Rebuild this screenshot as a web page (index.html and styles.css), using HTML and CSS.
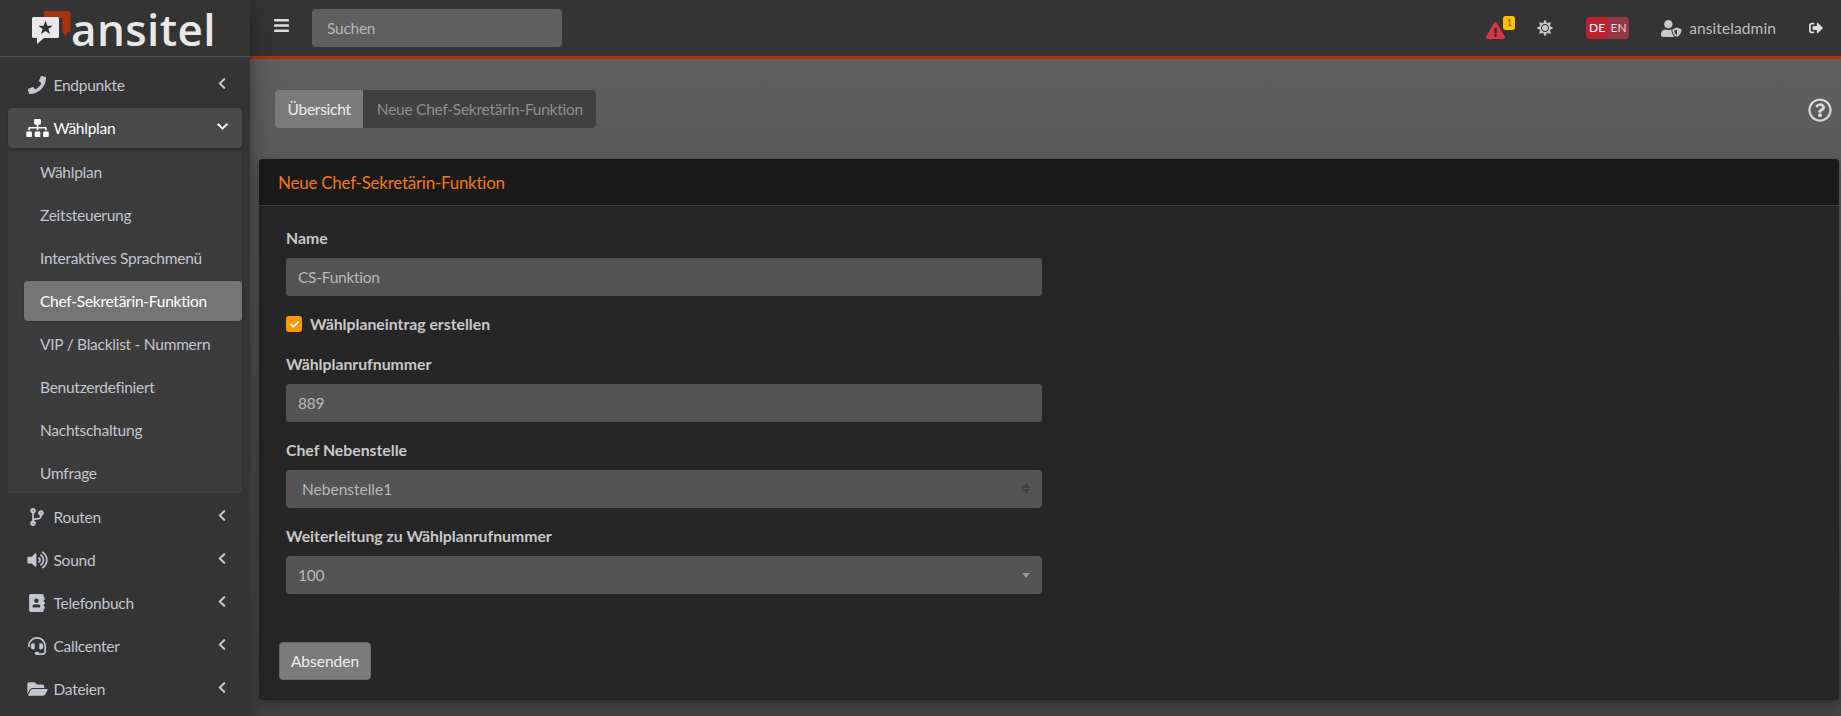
FILE: index.html
```html
<!DOCTYPE html>
<html lang="de">
<head>
<meta charset="utf-8">
<title>Neue Chef-Sekretärin-Funktion</title>
<link rel="stylesheet" href="styles.css">
</head>
<body>
<svg class="defs" width="0" height="0" aria-hidden="true">
  <symbol id="i-phone" viewBox="0 0 512 512"><path d="M493.4 24.6l-104-24c-11.3-2.6-22.9 3.3-27.5 13.9l-48 112c-4.2 9.8-1.4 21.3 6.9 28l60.6 49.6c-36 76.7-98.9 140.5-177.2 177.2l-49.6-60.6c-6.8-8.3-18.2-11.1-28-6.9l-112 48C3.9 366.5-2 378.1.6 389.4l24 104C27.1 504.2 36.7 512 48 512c256.1 0 464-207.5 464-464 0-11.2-7.7-20.9-18.6-23.4z"/></symbol>
  <symbol id="i-sitemap" viewBox="0 0 640 512"><path d="M128 352H32c-17.67 0-32 14.33-32 32v96c0 17.67 14.33 32 32 32h96c17.67 0 32-14.33 32-32v-96c0-17.67-14.33-32-32-32zm-24-80h192v48h48v-48h192v48h48v-57.59c0-21.17-17.23-38.41-38.41-38.41H344v-64h40c17.67 0 32-14.33 32-32V32c0-17.67-14.33-32-32-32H256c-17.67 0-32 14.33-32 32v96c0 17.67 14.33 32 32 32h40v64H94.41C73.23 224 56 241.23 56 262.41V320h48v-48zm264 80h-96c-17.67 0-32 14.33-32 32v96c0 17.67 14.33 32 32 32h96c17.67 0 32-14.33 32-32v-96c0-17.67-14.33-32-32-32zm240 0h-96c-17.67 0-32 14.33-32 32v96c0 17.67 14.33 32 32 32h96c17.67 0 32-14.33 32-32v-96c0-17.67-14.33-32-32-32z"/></symbol>
  <symbol id="i-left" viewBox="0 0 320 512"><path d="M34.52 239.03L228.87 44.69c9.37-9.37 24.57-9.37 33.94 0l22.67 22.67c9.36 9.36 9.37 24.52.04 33.9L131.49 256l154.02 154.75c9.34 9.38 9.32 24.54-.04 33.9l-22.67 22.67c-9.37 9.37-24.57 9.37-33.94 0L34.52 272.97c-9.37-9.37-9.37-24.57 0-33.94z"/></symbol>
  <symbol id="i-down" viewBox="0 0 448 512"><path d="M207.029 381.476L12.686 187.132c-9.373-9.373-9.373-24.569 0-33.941l22.667-22.667c9.357-9.357 24.522-9.375 33.901-.04L224 284.505l154.745-154.021c9.379-9.335 24.544-9.317 33.901.04l22.667 22.667c9.373 9.373 9.373 24.569 0 33.941L240.971 381.476c-9.373 9.372-24.569 9.372-33.942 0z"/></symbol>
  <symbol id="i-branch" viewBox="0 0 384 512"><path d="M384 144c0-44.2-35.8-80-80-80s-80 35.8-80 80c0 36.4 24.3 67.1 57.5 76.8-.6 16.1-4.2 28.5-11 36.9-15.4 19.2-49.3 22.4-85.2 25.7-28.2 2.6-57.4 5.4-81.3 16.9v-144c32.5-10.2 56-40.5 56-76.3 0-44.2-35.8-80-80-80S0 35.8 0 80c0 35.8 23.5 66.1 56 76.3v199.3C23.5 365.9 0 396.2 0 432c0 44.2 35.8 80 80 80s80-35.8 80-80c0-34-21.2-63.1-51.2-74.6 3.1-5.2 7.8-9.8 14.9-13.4 16.2-8.2 40.4-10.4 66.1-12.8 42.2-3.9 90-8.4 118.2-43.4 14-17.4 21.1-39.8 21.6-67.9 31.6-10.8 54.4-40.7 54.4-75.9zM80 64c8.8 0 16 7.2 16 16s-7.2 16-16 16-16-7.2-16-16 7.2-16 16-16zm0 384c-8.8 0-16-7.2-16-16s7.2-16 16-16 16 7.2 16 16-7.2 16-16 16zm224-320c8.8 0 16 7.2 16 16s-7.2 16-16 16-16-7.2-16-16 7.2-16 16-16z"/></symbol>
  <symbol id="i-volume" viewBox="0 0 576 512"><path d="M215.03 71.05L126.06 160H24c-13.26 0-24 10.74-24 24v144c0 13.25 10.74 24 24 24h102.06l88.97 88.95c15.03 15.03 40.97 4.47 40.97-16.97V88.02c0-21.46-25.96-31.98-40.97-16.97zm233.32-51.08c-11.17-7.33-26.18-4.24-33.51 6.95-7.34 11.17-4.22 26.18 6.95 33.51 66.27 43.49 105.82 116.6 105.82 195.58 0 78.98-39.55 152.09-105.82 195.58-11.17 7.32-14.29 22.34-6.95 33.5 7.04 10.71 21.93 14.56 33.51 6.95C528.27 439.58 576 351.33 576 256S528.27 72.43 448.35 19.97zM480 256c0-63.53-32.06-121.94-85.77-156.24-11.19-7.14-26.03-3.82-33.12 7.46s-3.78 26.21 7.41 33.36C408.27 165.97 432 209.11 432 256s-23.73 90.03-63.48 115.42c-11.19 7.14-14.5 22.07-7.41 33.36 6.51 10.36 21.12 15.14 33.12 7.46C447.94 377.94 480 319.54 480 256zm-141.77-76.87c-11.58-6.33-26.19-2.16-32.61 9.45-6.39 11.61-2.16 26.2 9.45 32.61C327.98 228.28 336 241.63 336 256c0 14.38-8.02 27.72-20.92 34.81-11.61 6.41-15.84 21-9.45 32.61 6.43 11.66 21.05 15.8 32.61 9.45 28.23-15.55 45.77-45 45.77-76.88s-17.54-61.32-45.78-76.86z"/></symbol>
  <symbol id="i-book" viewBox="0 0 448 512"><path d="M436 160c6.6 0 12-5.4 12-12v-40c0-6.6-5.4-12-12-12h-20V48c0-26.5-21.5-48-48-48H48C21.5 0 0 21.5 0 48v416c0 26.5 21.5 48 48 48h320c26.5 0 48-21.5 48-48v-48h20c6.6 0 12-5.4 12-12v-40c0-6.6-5.4-12-12-12h-20v-64h20c6.6 0 12-5.4 12-12v-40c0-6.6-5.4-12-12-12h-20v-64h20zm-228-32c35.3 0 64 28.7 64 64s-28.7 64-64 64-64-28.7-64-64 28.7-64 64-64zm112 236.8c0 10.6-10 19.2-22.4 19.2H118.4C106 384 96 375.4 96 364.8v-19.2c0-31.8 30.1-57.6 67.2-57.6h5c12.3 5.1 25.7 8 39.8 8s27.6-2.9 39.8-8h5c37.1 0 67.2 25.8 67.2 57.6v19.2z"/></symbol>
  <symbol id="i-headset" viewBox="0 0 512 512"><path d="M192 208c0-17.67-14.33-32-32-32h-16c-35.35 0-64 28.65-64 64v48c0 35.35 28.65 64 64 64h16c17.67 0 32-14.33 32-32V208zm176 144c35.35 0 64-28.65 64-64v-48c0-35.35-28.65-64-64-64h-16c-17.67 0-32 14.33-32 32v112c0 17.67 14.33 32 32 32h16zM256 0C113.18 0 4.58 118.83 0 256v16c0 8.84 7.16 16 16 16h16c8.84 0 16-7.16 16-16v-16c0-114.69 93.31-208 208-208s208 93.31 208 208h-.12c.08 2.43.12 165.72.12 165.72 0 23.35-18.93 42.28-42.28 42.28H320c0-26.51-21.49-48-48-48h-32c-26.51 0-48 21.49-48 48s21.49 48 48 48h181.72c49.86 0 90.28-40.42 90.28-90.28V256C507.42 118.83 398.82 0 256 0z"/></symbol>
  <symbol id="i-folder" viewBox="0 0 576 512"><path d="M572.694 292.093L500.27 416.248A63.997 63.997 0 0 1 444.989 448H45.025c-18.523 0-30.064-20.093-20.731-36.093l72.424-124.155A64 64 0 0 1 152 256h399.964c18.523 0 30.064 20.093 20.73 36.093zM152 224h328v-48c0-26.51-21.49-48-48-48H272l-64-64H48C21.49 64 0 85.49 0 112v278.046l69.077-118.418C86.214 242.25 117.989 224 152 224z"/></symbol>
</svg>
<div class="app">
  <aside class="sidebar">
    <div class="brand">
      <svg class="brand-mark" viewBox="0 0 40 34" aria-hidden="true">
        <path class="mark-red" d="M12 1h25a1.500 1.500 0 0 1 1.500 1.500V21a1.500 1.500 0 0 1-1.500 1.500h-2.500V27l-4-4.500V8H12z"/>
        <path class="mark-white" d="M1.500 7h24A1.500 1.500 0 0 1 27 8.500v18a1.500 1.500 0 0 1-1.500 1.500H12l-7 6v-6H1.500A1.500 1.500 0 0 1 0 26.500v-18A1.500 1.500 0 0 1 1.500 7z"/>
        <path class="mark-star" d="M13.500 10.500l1.900 5.200h5.400l-4.400 3.300 1.700 5.300-4.600-3.200-4.600 3.200 1.700-5.300-4.400-3.300h5.400z"/>
      </svg>
      <span class="brand-text">ansitel</span>
    </div>
    <nav class="nav">
      <a class="nav-item"><span class="nav-icon"><svg class="ic-phone"><use href="#i-phone"/></svg></span><span class="nav-label">Endpunkte</span><svg class="chev"><use href="#i-left"/></svg></a>
      <a class="nav-item open"><span class="nav-icon"><svg class="ic-sitemap"><use href="#i-sitemap"/></svg></span><span class="nav-label">Wählplan</span><svg class="chev-down"><use href="#i-down"/></svg></a>
      <div class="subnav">
        <a class="sub-item">Wählplan</a>
        <a class="sub-item">Zeitsteuerung</a>
        <a class="sub-item">Interaktives Sprachmenü</a>
        <a class="sub-item active">Chef-Sekretärin-Funktion</a>
        <a class="sub-item">VIP / Blacklist - Nummern</a>
        <a class="sub-item">Benutzerdefiniert</a>
        <a class="sub-item">Nachtschaltung</a>
        <a class="sub-item">Umfrage</a>
      </div>
      <a class="nav-item"><span class="nav-icon"><svg class="ic-branch"><use href="#i-branch"/></svg></span><span class="nav-label">Routen</span><svg class="chev"><use href="#i-left"/></svg></a>
      <a class="nav-item"><span class="nav-icon"><svg class="ic-volume"><use href="#i-volume"/></svg></span><span class="nav-label">Sound</span><svg class="chev"><use href="#i-left"/></svg></a>
      <a class="nav-item"><span class="nav-icon"><svg class="ic-book"><use href="#i-book"/></svg></span><span class="nav-label">Telefonbuch</span><svg class="chev"><use href="#i-left"/></svg></a>
      <a class="nav-item"><span class="nav-icon"><svg class="ic-headset"><use href="#i-headset"/></svg></span><span class="nav-label">Callcenter</span><svg class="chev"><use href="#i-left"/></svg></a>
      <a class="nav-item"><span class="nav-icon"><svg class="ic-folder"><use href="#i-folder"/></svg></span><span class="nav-label">Dateien</span><svg class="chev"><use href="#i-left"/></svg></a>
    </nav>
  </aside>
  <div class="main">
    <header class="topbar">
      <svg class="burger" viewBox="0 0 448 512" aria-hidden="true"><path d="M16 132h416c8.837 0 16-7.163 16-16V76c0-8.837-7.163-16-16-16H16C7.163 60 0 67.163 0 76v40c0 8.837 7.163 16 16 16zm0 160h416c8.837 0 16-7.163 16-16v-40c0-8.837-7.163-16-16-16H16c-8.837 0-16 7.163-16 16v40c0 8.837 7.163 16 16 16zm0 160h416c8.837 0 16-7.163 16-16v-40c0-8.837-7.163-16-16-16H16c-8.837 0-16 7.163-16 16v40c0 8.837 7.163 16 16 16z"/></svg>
      <div class="search">Suchen</div>
      <div class="top-right">
        <div class="alert">
          <svg class="alert-icon" viewBox="0 0 576 512" aria-hidden="true"><path d="M569.517 440.013C587.975 472.007 564.806 512 527.94 512H48.054c-36.937 0-59.999-40.055-41.577-71.987L246.423 24.035c18.467-32.009 64.72-31.951 83.154 0l239.94 416.028zM288 354c-25.405 0-46 20.595-46 46s20.595 46 46 46 46-20.595 46-46-20.595-46-46-46zm-43.673-165.346l7.418 136c.347 6.364 5.609 11.346 11.982 11.346h48.546c6.373 0 11.635-4.982 11.982-11.346l7.418-136c.375-6.874-5.098-12.654-11.982-12.654h-63.383c-6.884 0-12.356 5.78-11.981 12.654z"/></svg>
          <span class="badge">1</span>
        </div>
        <svg class="sun" viewBox="0 0 512 512" aria-hidden="true"><path d="M256 160c-52.900 0-96 43.100-96 96s43.100 96 96 96 96-43.100 96-96-43.100-96-96-96zm246.400 80.500l-94.700-47.300 33.500-100.400c4.500-13.600-8.400-26.500-21.900-21.900l-100.400 33.500-47.400-94.800c-6.400-12.800-24.600-12.800-31 0l-47.300 94.700L92.700 70.800c-13.600-4.500-26.500 8.400-21.900 21.900l33.500 100.400-94.700 47.400c-12.800 6.400-12.800 24.600 0 31l94.700 47.300-33.500 100.500c-4.500 13.600 8.400 26.500 21.900 21.900l100.400-33.500 47.300 94.700c6.400 12.800 24.600 12.800 31 0l47.300-94.700 100.400 33.500c13.600 4.500 26.500-8.400 21.900-21.900l-33.500-100.400 94.700-47.300c13-6.500 13-24.700.2-31.100zm-155.900 106c-49.900 49.900-131.100 49.900-181 0-49.900-49.900-49.900-131.100 0-181 49.900-49.900 131.100-49.900 181 0 49.900 49.900 49.900 131.100 0 181z"/></svg>
        <div class="lang"><span class="lang-de">DE</span><span class="lang-en">EN</span></div>
        <div class="user">
          <svg class="user-icon" viewBox="0 0 640 512" aria-hidden="true"><path d="M224 256c70.700 0 128-57.300 128-128S294.700 0 224 0 96 57.300 96 128s57.300 128 128 128zm89.600 32h-16.700c-22.200 10.200-46.900 16-72.900 16s-50.600-5.800-72.900-16h-16.700C60.200 288 0 348.200 0 422.400V464c0 26.500 21.500 48 48 48h352c3.500 0 7-.4 10.300-1.100C362 464 320 396 320 320v-20c0-4 .3-8 .7-11.900-2.300-.1-4.700-.1-7.100-.1z"/><path fill-rule="evenodd" d="M484 224l-128 52c-8 3-12 10-12 18 0 104 60 180 128 210 7 3 17 3 24 0 64-28 128-104 128-210 0-8-5-15-12-18l-116-52c-4-2-8-2-12 0zm4 72v156c-42-20-84-66-86-132z"/></svg>
          <span class="user-name">ansiteladmin</span>
        </div>
        <svg class="signout" viewBox="0 0 512 512" aria-hidden="true"><path d="M497 273L329 441c-15 15-41 4.500-41-17v-96H152c-13.300 0-24-10.700-24-24v-96c0-13.300 10.700-24 24-24h136V88c0-21.400 25.900-32 41-17l168 168c9.300 9.400 9.300 24.600 0 34zM192 436v-40c0-6.600-5.400-12-12-12H96c-17.700 0-32-14.300-32-32V160c0-17.700 14.300-32 32-32h84c6.600 0 12-5.400 12-12V76c0-6.600-5.400-12-12-12H96c-53 0-96 43-96 96v192c0 53 43 96 96 96h84c6.600 0 12-5.400 12-12z"/></svg>
      </div>
    </header>
    <main class="content">
      <div class="crumb-row">
        <div class="crumbs"><a class="crumb-link">Übersicht</a><span class="crumb-current">Neue Chef-Sekretärin-Funktion</span></div>
        <svg class="help" viewBox="0 0 512 512" aria-hidden="true"><path d="M256 8C119.043 8 8 119.083 8 256c0 136.997 111.043 248 248 248s248-111.003 248-248C504 119.083 392.957 8 256 8zm0 448c-110.532 0-200-89.431-200-200 0-110.495 89.472-200 200-200 110.491 0 200 89.471 200 200 0 110.530-89.431 200-200 200zm107.244-255.200c0 67.052-72.421 68.084-72.421 92.863V300c0 6.627-5.373 12-12 12h-45.647c-6.627 0-12-5.373-12-12v-8.659c0-35.745 27.100-50.034 47.579-61.516 17.561-9.845 28.324-16.541 28.324-29.579 0-17.246-21.999-28.693-39.784-28.693-23.189 0-33.894 10.977-48.942 29.969-4.057 5.120-11.460 6.071-16.666 2.124l-27.824-21.098c-5.107-3.872-6.251-11.066-2.644-16.363C184.846 131.491 214.940 112 261.794 112c49.071 0 101.450 38.304 101.450 88.800zM298 368c0 23.159-18.841 42-42 42s-42-18.841-42-42 18.841-42 42-42 42 18.841 42 42z"/></svg>
      </div>
      <section class="card">
        <div class="card-head">Neue Chef-Sekretärin-Funktion</div>
        <form class="card-body">
          <div class="form-col">
            <div class="field">
              <div class="label">Name</div>
              <div class="control">CS-Funktion</div>
            </div>
            <div class="check-row">
              <span class="checkbox"><svg viewBox="0 0 512 512" aria-hidden="true"><path d="M173.898 439.404l-166.400-166.400c-9.997-9.997-9.997-26.206 0-36.204l36.203-36.204c9.997-9.998 26.207-9.998 36.204 0L192 312.690 432.095 72.596c9.997-9.997 26.207-9.997 36.204 0l36.203 36.204c9.997 9.997 9.997 26.206 0 36.204l-294.400 294.401c-9.998 9.997-26.207 9.997-36.204-.001z"/></svg></span>
              <span class="label">Wählplaneintrag erstellen</span>
            </div>
            <div class="field">
              <div class="label">Wählplanrufnummer</div>
              <div class="control">889</div>
            </div>
            <div class="field">
              <div class="label">Chef Nebenstelle</div>
              <div class="control select-native">Nebenstelle1<span class="updown"></span></div>
            </div>
            <div class="field">
              <div class="label">Weiterleitung zu Wählplanrufnummer</div>
              <div class="control select-flat">100<span class="caret"></span></div>
            </div>
          </div>
          <button class="submit" type="button">Absenden</button>
        </form>
      </section>
    </main>
  </div>
</div>
</body>
</html>
```
FILE: styles.css
```css
* { box-sizing: border-box; }
html, body { margin: 0; height: 716px; overflow: hidden; }
body { font-family: "Lato", "Noto Sans", sans-serif; font-size: 15.5px; letter-spacing: -.26px; color: #c2c7d0; background: #5a5a5a; }
.defs { position: absolute; }
.app { display: flex; height: 716px; }

.sidebar { width: 250px; flex: none; background: #343434; box-shadow: 0 14px 28px rgba(0,0,0,.25), 0 10px 10px rgba(0,0,0,.22); position: relative; z-index: 2; }
.brand { height: 57px; border-bottom: 1px solid #4b545c; display: flex; align-items: flex-start; padding: 10px 0 0 32px; gap: 0; }
.brand-mark { width: 40px; height: 34px; flex: none; }
.mark-red { fill: #a8320f; }
.mark-white { fill: #e9e9e9; }
.mark-star { fill: #333; }
.brand-text { font-family: "Open Sans", sans-serif; font-weight: 600; font-size: 44px; line-height: 36px; letter-spacing: .4px; color: #e8e8e8; margin: 1px 0 0 -1px; }

.nav { padding: 8px 8px 0; display: flex; flex-direction: column; }
.nav-item { height: 40px; margin-bottom: 3px; display: flex; align-items: center; padding: 0 16px 0 18px; border-radius: 4px; color: #c2c7d0; }
.nav-item.open { background: #494949; color: #fff; box-shadow: 0 1px 3px rgba(0,0,0,.2); }
.nav-icon { width: 28px; height: 24px; flex: none; display: flex; align-items: center; justify-content: center; margin-left: -3px; margin-right: 2.5px; fill: #c2c7d0; }
.open .nav-icon { fill: #fff; }
.nav-label { flex: 1; }
.ic-phone { width: 18px; height: 18px; }
.ic-sitemap { width: 23px; height: 18px; }
.ic-branch { width: 14px; height: 18px; }
.ic-volume { width: 21px; height: 18px; }
.ic-book { width: 16px; height: 18px; }
.ic-headset { width: 18px; height: 18px; }
.ic-folder { width: 21px; height: 18px; }
.chev { width: 8px; height: 13px; fill: #c2c7d0; flex: none; margin-top: -3px; }
.chev-down { width: 11px; height: 13px; fill: #fff; flex: none; margin-right: -2px; margin-top: -3px; }

.subnav { background: #3c3c3c; display: flex; flex-direction: column; padding-top: 1px; margin-bottom: 4px; }
.sub-item { height: 40px; margin-bottom: 3px; display: flex; align-items: center; padding-left: 32px; color: #c2c7d0; border-radius: 4px; }
.sub-item:last-child { margin-bottom: 0; }
.sub-item.active { background: #757575; color: #fff; margin-left: 16px; padding-left: 16px; box-shadow: 0 1px 3px rgba(0,0,0,.2); }

.main { flex: 1; min-width: 0; display: flex; flex-direction: column; }
.topbar { height: 59px; flex: none; background: #343434; border-bottom: 3px solid #a8320f; display: flex; align-items: center; padding: 0 17px 0 24px; }
.burger { width: 15px; height: 17px; fill: #dcdcdc; margin-right: 23px; margin-top: -5px; flex: none; }
.search { width: 250px; height: 38px; background: #5f5f5f; border-radius: 4px; padding: 0 15px; display: flex; align-items: center; color: #b4b4b4; }
.top-right { margin-left: auto; display: flex; align-items: center; color: #bdbdbd; }
.alert { position: relative; width: 30px; height: 24px; }
.alert-icon { position: absolute; left: 0; top: 6px; width: 19px; height: 17px; fill: #dc3545; }
.badge { position: absolute; left: 17px; top: 0; width: 12px; height: 14px; border-radius: 3px; background: #ffc107; color: #6d5a1a; font-size: 9px; line-height: 14px; text-align: center; }
.sun { width: 16px; height: 16px; fill: #c8c8c8; margin-left: 21px; }
.lang { display: flex; height: 22px; margin-left: 33px; border-radius: 4px; overflow: hidden; font-size: 12px; line-height: 22px; letter-spacing: 0; }
.lang-de { width: 22px; background: #bd2130; color: #fff; text-align: center; }
.lang-en { width: 21px; background: #973644; color: #ddd; text-align: center; }
.user { display: flex; align-items: center; margin-left: 32px; }
.user-icon { width: 21px; height: 17px; fill: #c8c8c8; margin-right: 7px; }
.user-name { color: #bdbdbd; letter-spacing: .1px; }
.signout { width: 16px; height: 14px; fill: #dcdcdc; margin-left: 32px; margin-top: -1px; }

.content { flex: 1; min-height: 0; padding: 31px 2px 0 9px; background: linear-gradient(#5f5f5f, #434343); }
.crumb-row { display: flex; align-items: flex-start; padding-left: 16px; padding-right: 7px; height: 69px; justify-content: space-between; }
.crumbs { display: flex; height: 38px; background: #414141; border-radius: 4px; overflow: hidden; }
.crumb-link { background: #7b7b7b; color: #eee; padding: 0 12.5px; display: flex; align-items: center; }
.crumb-current { color: #8f8f8f; padding: 0 13.5px; display: flex; align-items: center; }
.help { width: 24px; height: 24px; fill: #d6d6d6; margin-top: 8px; }

.card { background: #262626; border-radius: 4px; height: 541px; box-shadow: 0 0 1px rgba(0,0,0,.125), 0 4px 12px rgba(0,0,0,.3); overflow: hidden; }
.card-head { height: 47px; background: #1a1a1a; border-bottom: 1px solid #3f3f3f; color: #f0790f; font-size: 17px; padding-left: 19px; display: flex; align-items: center; }
.card-body { padding: 21px 20px 0; }
.form-col { width: 756px; margin-left: 7px; }
.field { margin-bottom: 17px; }
.label { font-weight: 700; color: #c8c8c8; font-size: 15.8px; letter-spacing: 0; line-height: 22px; margin-bottom: 9px; }
.control { height: 38px; background: #545454; border-radius: 4px; padding: 0 12px; display: flex; align-items: center; color: #b8b8b8; position: relative; }
.select-native { padding-left: 16px; letter-spacing: 0; }
.updown { position: absolute; right: 12px; top: 13px; width: 8px; height: 11px; }
.updown::before, .updown::after { content: ""; position: absolute; left: 0; border-left: 4px solid transparent; border-right: 4px solid transparent; }
.updown::before { top: 0; border-bottom: 5px solid #3c3f46; }
.updown::after { bottom: 0; border-top: 5px solid #3c3f46; }
.caret { position: absolute; right: 12px; top: 17px; border-left: 4px solid transparent; border-right: 4px solid transparent; border-top: 5px solid #999; }
.check-row { display: flex; align-items: center; height: 20px; margin: 18px 0 19px; gap: 8px; }
.check-row .label { margin: 0; }
.checkbox { width: 16px; height: 16px; border-radius: 3px; background: #ff9800; display: flex; align-items: center; justify-content: center; fill: #fff; flex: none; }
.checkbox svg { width: 9px; height: 9px; }
.submit { display: block; margin-top: 48px; width: 92px; height: 38px; padding: 0; border: 1px solid #6a6a6a; border-radius: 4px; background: #7b7b7b; color: #eee; font: inherit; letter-spacing: 0; }
```
